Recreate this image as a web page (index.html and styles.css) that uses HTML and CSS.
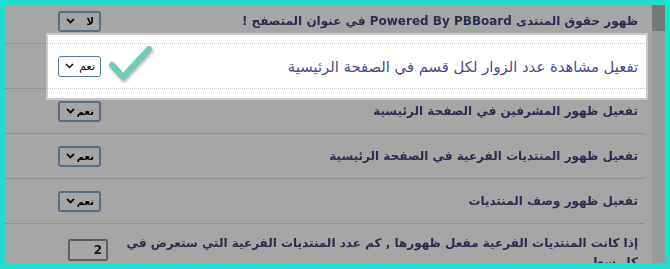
FILE: index.html
```html
<html>
<head>
	<title>PBBoard forum settings</title>
	<link rel="stylesheet" href="styles.css">
</head>
<body>
	<div class="frame">
		<div class="panel">
			<div class="list" dir="rtl">
				<div class="row dim">
					<div class="label">ظهور حقوق المنتدى Powered By PBBoard في عنوان المتصفح !</div>
					<div class="ctrl">
						<span class="pick"><span>لا</span><svg width="9" height="6" viewBox="0 0 9 6"><path d="M1 1 L4.5 4.5 L8 1" fill="none" stroke="#111" stroke-width="1.8"/></svg></span>
					</div>
				</div>
				<div class="row focus">
					<div class="label">تفعيل مشاهدة عدد الزوار لكل قسم في الصفحة الرئيسية</div>
					<div class="ctrl">
						<span class="pick"><span>نعم</span><svg width="9" height="6" viewBox="0 0 9 6"><path d="M1 1 L4.5 4.5 L8 1" fill="none" stroke="#111" stroke-width="1.5"/></svg></span>
					</div>
					<span class="spot"></span>
					<svg class="tick" width="46" height="38" viewBox="0 0 46 38">
						<path d="M5 20 L16 32 L42 4" fill="none" stroke="#6fcab8" stroke-width="6" stroke-linecap="round" stroke-linejoin="round"/>
					</svg>
				</div>
				<div class="row dim">
					<div class="label">تفعيل ظهور المشرفين في الصفحة الرئيسية</div>
					<div class="ctrl">
						<span class="pick"><span>نعم</span><svg width="9" height="6" viewBox="0 0 9 6"><path d="M1 1 L4.5 4.5 L8 1" fill="none" stroke="#111" stroke-width="1.8"/></svg></span>
					</div>
				</div>
				<div class="row dim">
					<div class="label">تفعيل ظهور المنتديات الفرعية في الصفحة الرئيسية</div>
					<div class="ctrl">
						<span class="pick"><span>نعم</span><svg width="9" height="6" viewBox="0 0 9 6"><path d="M1 1 L4.5 4.5 L8 1" fill="none" stroke="#111" stroke-width="1.8"/></svg></span>
					</div>
				</div>
				<div class="row dim">
					<div class="label">تفعيل ظهور وصف المنتديات</div>
					<div class="ctrl">
						<span class="pick"><span>نعم</span><svg width="9" height="6" viewBox="0 0 9 6"><path d="M1 1 L4.5 4.5 L8 1" fill="none" stroke="#111" stroke-width="1.8"/></svg></span>
					</div>
				</div>
				<div class="row dim tall">
					<div class="label">إذا كانت المنتديات الفرعية مفعل ظهورها , كم عدد المنتديات الفرعية التي ستعرض في كل سطر</div>
					<div class="ctrl num">
						<span class="field">2</span>
					</div>
				</div>
			</div>
		</div>
		<div class="scrollbar"><div class="thumb"></div></div>
	</div>
</body>
</html>
```

FILE: styles.css
```css
*, *:before, *:after {
	box-sizing: border-box;
}
body {
	margin: 0;
	background: #22dccf;
	font-family: "DejaVu Sans", Tahoma, sans-serif;
}
.frame {
	width: 670px;
	height: 269px;
	border: 5px solid #22dccf;
	border-bottom-width: 6px;
	background: #fff;
	display: flex;
	overflow: hidden;
}
.panel {
	flex: 1;
	padding-right: 7px;
}
.list {
	margin-top: -6px;
}
.row {
	display: flex;
	align-items: center;
	height: 45px;
	border-bottom: 1px dotted #c8c8c8;
	position: relative;
}
.label {
	flex: 1;
	padding-right: 7px;
	font-size: 14.8px;
	line-height: 19px;
	color: #4a4a8a;
}
.dim .label {
	font-size: 12px;
	font-weight: bold;
	color: #45457f;
	filter: blur(0.6px);
}
.ctrl {
	width: 110px;
	display: flex;
	justify-content: flex-end;
	padding-left: 53px;
}
.dim .ctrl {
	filter: blur(0.6px);
}
.ctrl.num {
	padding-left: 63px;
}
.pick {
	width: 43px;
	height: 21px;
	border: 1px solid #5575ad;
	border-radius: 3px;
	background: #fff;
	display: flex;
	align-items: center;
	justify-content: space-between;
	padding: 0 5px 0 6px;
	font-size: 11px;
	color: #000;
}
.dim .pick {
	border: 2px solid #8da6d8;
	font-size: 10px;
	font-weight: bold;
}
.field {
	width: 40px;
	height: 22px;
	border: 2px solid #8f8f8f;
	border-radius: 2px;
	background: #fff;
	font-size: 12px;
	font-weight: bold;
	line-height: 18px;
	padding-right: 4px;
	color: #222240;
}
.tall {
	align-items: flex-start;
	padding-top: 10px;
	height: auto;
}
.tall .ctrl {
	padding-top: 5px;
}
.spot {
	position: absolute;
	top: -9px;
	bottom: -10px;
	left: 43px;
	right: -1px;
	z-index: 1;
	box-shadow: 0 0 0 2px rgba(255, 255, 255, 0.4), 0 0 0 2000px rgba(0, 0, 0, 0.35);
	pointer-events: none;
}
.tick {
	position: absolute;
	left: 102px;
	top: 1px;
	z-index: 2;
	filter: drop-shadow(1px 2px 1.5px rgba(0, 0, 0, 0.3));
}
.scrollbar {
	width: 13px;
	background: #efefef;
}
.thumb {
	height: 26px;
	background: #b8b8b8;
}
```
